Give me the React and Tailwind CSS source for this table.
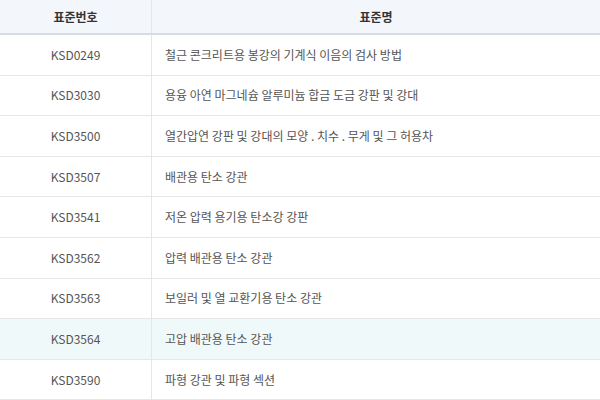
const rows = [
  ["KSD0249", "철근 콘크리트용 봉강의 기계식 이음의 검사 방법"],
  ["KSD3030", "용융 아연 마그네슘 알루미늄 합금 도금 강판 및 강대"],
  ["KSD3500", "열간압연 강판 및 강대의 모양 . 치수 . 무게 및 그 허용차"],
  ["KSD3507", "배관용 탄소 강관"],
  ["KSD3541", "저온 압력 용기용 탄소강 강판"],
  ["KSD3562", "압력 배관용 탄소 강관"],
  ["KSD3563", "보일러 및 열 교환기용 탄소 강관"],
  ["KSD3564", "고압 배관용 탄소 강관"],
  ["KSD3590", "파형 강관 및 파형 섹션"],
];

export default function App() {
  return (
    <div
      className="w-[600px] h-[400px] overflow-hidden bg-white text-[12px]"
      style={{ fontFamily: '"Noto Sans CJK KR", "Noto Sans", sans-serif' }}
    >
      <div className="flex h-[35px] bg-[#f3f6fb] border-b-2 border-[#d8dbe0] font-bold text-[#333]">
        <div className="w-[152px] flex items-center justify-center border-r border-[#e3e6ea]">
          표준번호
        </div>
        <div className="flex-1 flex items-center justify-center">표준명</div>
      </div>
      {rows.map(([code, name], i) => (
        <div
          key={code}
          className={`flex h-[40.6px] border-b border-[#e6e6e6] text-[#555] ${
            i === 7 ? "bg-[#f0f9fa]" : "bg-white"
          }`}
        >
          <div className="w-[152px] flex items-center justify-center border-r border-[#e6e6e6]">
            {code}
          </div>
          <div className="flex-1 flex items-center pl-[13px]">{name}</div>
        </div>
      ))}
    </div>
  );
}
